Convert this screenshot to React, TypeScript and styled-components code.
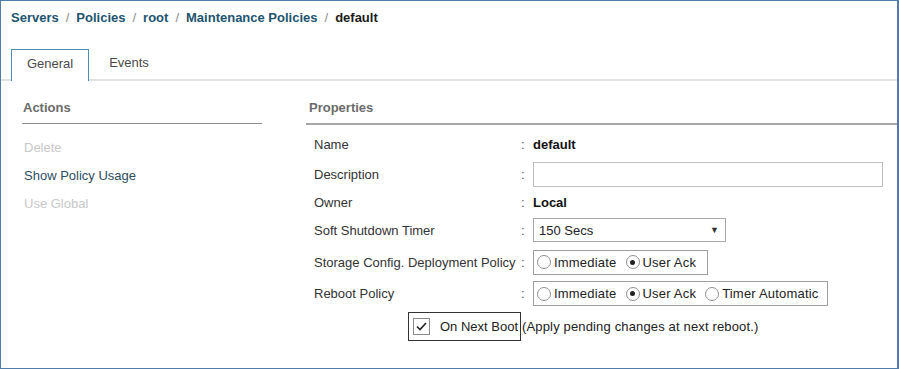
import React from "react";
import styled, { createGlobalStyle } from "styled-components";

const GlobalStyle = createGlobalStyle`
  body {
    margin: 0;
    font-family: "Liberation Sans", Arial, sans-serif;
    background: #ffffff;
  }
`;

const Frame = styled.div`
  width: 899px;
  height: 369px;
  box-sizing: border-box;
  border: 1px solid #4f7cab;
  border-right-width: 2px;
  background: #ffffff;
  overflow: hidden;
`;

const Breadcrumb = styled.div`
  display: flex;
  gap: 7px;
  padding: 9px 0 0 10px;
  height: 17px;
  font-size: 13px;
  font-weight: bold;
  line-height: 16px;
`;

const Crumb = styled.span<{ $current?: boolean }>`
  color: ${(p) => (p.$current ? "#1a1a1a" : "#21546f")};
`;

const Sep = styled.span`
  color: #8a8a8a;
  font-weight: normal;
`;

const TabBar = styled.div`
  display: flex;
  margin-top: 22px;
  padding-left: 10px;
  height: 30px;
  border-bottom: 2px solid #e2e2e2;
`;

const Tab = styled.div<{ $active?: boolean }>`
  width: ${(p) => (p.$active ? "78px" : "80px")};
  height: ${(p) => (p.$active ? "32px" : "30px")};
  box-sizing: border-box;
  display: flex;
  align-items: center;
  justify-content: center;
  font-size: 13px;
  color: #4a4a4a;
  background: #ffffff;
  border: ${(p) => (p.$active ? "1px solid #4b8db3" : "none")};
  border-bottom: none;
  padding-bottom: ${(p) => (p.$active ? "5px" : "3px")};
`;

const Body = styled.div`
  display: flex;
  padding-top: 19px;
`;

const ActionsCol = styled.div`
  width: 240px;
  margin-left: 21px;
`;

const PropsCol = styled.div`
  flex: 1;
  margin-left: 44px;
`;

const Heading = styled.div<{ $thick?: boolean }>`
  height: 23px;
  padding-left: ${(p) => (p.$thick ? "3px" : "1px")};
  font-size: 13px;
  font-weight: bold;
  color: #6b6b6b;
  line-height: 16px;
  border-bottom: ${(p) => (p.$thick ? "2px solid #a6a6a6" : "1px solid #8c8c8c")};
`;

const ActionList = styled.div`
  display: flex;
  flex-direction: column;
  gap: 12px;
  padding: 16px 0 0 2px;
`;

const Action = styled.div<{ $disabled?: boolean }>`
  font-size: 13px;
  line-height: 16px;
  color: ${(p) => (p.$disabled ? "#c8c8c8" : "#2c4d5e")};
`;

const Rows = styled.div`
  display: flex;
  flex-direction: column;
  gap: 6px;
  padding: 8px 0 0 8px;
`;

const Row = styled.div<{ $h: number }>`
  display: flex;
  align-items: center;
  height: ${(p) => p.$h}px;
  font-size: 13px;
  color: #333333;
`;

const Label = styled.div`
  width: 207px;
`;

const Colon = styled.div`
  width: 12px;
  color: #555555;
`;

const Value = styled.div`
  font-weight: bold;
  color: #111111;
`;

const TextInput = styled.div`
  width: 350px;
  height: 25px;
  box-sizing: border-box;
  border: 1px solid #bdbdbd;
`;

const Select = styled.div`
  width: 193px;
  height: 24px;
  box-sizing: border-box;
  border: 1px solid #a9a9a9;
  display: flex;
  align-items: center;
  justify-content: space-between;
  padding: 0 6px 0 5px;
  color: #222222;
`;

const Arrow = styled.span`
  font-size: 9px;
  color: #333333;
`;

const RadioGroup = styled.div<{ $w: number }>`
  width: ${(p) => p.$w}px;
  height: 25px;
  box-sizing: border-box;
  border: 1px solid #9e9e9e;
  display: flex;
  align-items: center;
  padding: 0 0 0 3px;
  gap: 9px;
`;

const RadioItem = styled.div`
  display: flex;
  align-items: center;
  gap: 3px;
  color: #222222;
  letter-spacing: 0.2px;
`;

const Circle = styled.span<{ $on?: boolean }>`
  width: 14px;
  height: 14px;
  box-sizing: border-box;
  border-radius: 50%;
  border: 1px solid #8f8f8f;
  display: flex;
  align-items: center;
  justify-content: center;
  &::after {
    content: "";
    width: 5px;
    height: 5px;
    border-radius: 50%;
    background: ${(p) => (p.$on ? "#222222" : "transparent")};
  }
`;

const CheckRow = styled.div`
  display: flex;
  align-items: center;
  height: 29px;
  padding-left: 94px;
  font-size: 13px;
  color: #222222;
`;

const CheckBox = styled.div`
  height: 29px;
  box-sizing: border-box;
  border: 1px solid #333333;
  display: flex;
  align-items: center;
  padding: 0 2px 0 4px;
  gap: 10px;
`;

const Tick = styled.span`
  width: 17px;
  height: 17px;
  box-sizing: border-box;
  border: 1px solid #8a8a8a;
  display: flex;
  align-items: center;
  justify-content: center;
`;

const Hint = styled.span`
  margin-left: 1px;
  letter-spacing: 0.15px;
`;

type RadioProps = { options: string[]; selected: string; width: number };

function Radios({ options, selected, width }: RadioProps) {
  return (
    <RadioGroup $w={width}>
      {options.map((o) => (
        <RadioItem key={o}>
          <Circle $on={o === selected} />
          {o}
        </RadioItem>
      ))}
    </RadioGroup>
  );
}

export default function App() {
  return (
    <Frame>
      <GlobalStyle />
      <Breadcrumb>
        <Crumb>Servers</Crumb>
        <Sep>/</Sep>
        <Crumb>Policies</Crumb>
        <Sep>/</Sep>
        <Crumb>root</Crumb>
        <Sep>/</Sep>
        <Crumb>Maintenance Policies</Crumb>
        <Sep>/</Sep>
        <Crumb $current>default</Crumb>
      </Breadcrumb>
      <TabBar>
        <Tab $active>General</Tab>
        <Tab>Events</Tab>
      </TabBar>
      <Body>
        <ActionsCol>
          <Heading>Actions</Heading>
          <ActionList>
            <Action $disabled>Delete</Action>
            <Action>Show Policy Usage</Action>
            <Action $disabled>Use Global</Action>
          </ActionList>
        </ActionsCol>
        <PropsCol>
          <Heading $thick>Properties</Heading>
          <Rows>
            <Row $h={22}>
              <Label>Name</Label>
              <Colon>:</Colon>
              <Value>default</Value>
            </Row>
            <Row $h={26}>
              <Label>Description</Label>
              <Colon>:</Colon>
              <TextInput />
            </Row>
            <Row $h={18}>
              <Label>Owner</Label>
              <Colon>:</Colon>
              <Value>Local</Value>
            </Row>
            <Row $h={26}>
              <Label>Soft Shutdown Timer</Label>
              <Colon>:</Colon>
              <Select>
                150 Secs
                <Arrow>▼</Arrow>
              </Select>
            </Row>
            <Row $h={26}>
              <Label>Storage Config. Deployment Policy</Label>
              <Colon>:</Colon>
              <Radios options={["Immediate", "User Ack"]} selected="User Ack" width={175} />
            </Row>
            <Row $h={25}>
              <Label>Reboot Policy</Label>
              <Colon>:</Colon>
              <Radios
                options={["Immediate", "User Ack", "Timer Automatic"]}
                selected="User Ack"
                width={295}
              />
            </Row>
            <CheckRow>
              <CheckBox>
                <Tick>
                  <svg width="11" height="9" viewBox="0 0 11 9">
                    <path d="M1 4.5 L4 7.5 L10 1" fill="none" stroke="#222" strokeWidth="1.6" />
                  </svg>
                </Tick>
                On Next Boot
              </CheckBox>
              <Hint>(Apply pending changes at next reboot.)</Hint>
            </CheckRow>
          </Rows>
        </PropsCol>
      </Body>
    </Frame>
  );
}
